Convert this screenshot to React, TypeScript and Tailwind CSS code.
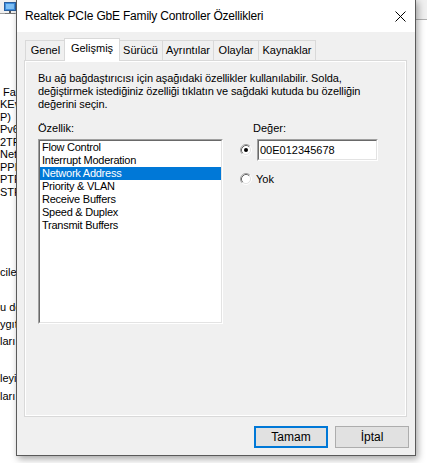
import React from "react";

function Radio({ checked }: { checked?: boolean }) {
  return (
    <svg width="12" height="12" viewBox="0 0 12 12" className="shrink-0">
      <circle cx="6" cy="6" r="4.5" fill="#ffffff" />
      <path d="M2.11 9.89 A5.5 5.5 0 0 1 9.89 2.11" fill="none" stroke="#a0a0a0" strokeWidth="1" />
      <path d="M9.89 2.11 A5.5 5.5 0 0 1 2.11 9.89" fill="none" stroke="#ffffff" strokeWidth="1" />
      <path d="M2.82 9.18 A4.5 4.5 0 0 1 9.18 2.82" fill="none" stroke="#696969" strokeWidth="1" />
      <path d="M9.18 2.82 A4.5 4.5 0 0 1 2.82 9.18" fill="none" stroke="#e3e3e3" strokeWidth="1" />
      {checked && <circle cx="6" cy="6" r="2" fill="#000000" />}
    </svg>
  );
}

const bgTop = [
  { y: 86, x: 3, t: "Fam" },
  { y: 98, x: 0, t: "KEv" },
  { y: 111, x: 0, t: "P)" },
  { y: 123, x: 0, t: "Pv6" },
  { y: 136, x: 0, t: "2TP" },
  { y: 148, x: 0, t: "Netw" },
  { y: 161, x: 0, t: "PPP" },
  { y: 173, x: 0, t: "PTP" },
  { y: 186, x: 0, t: "STP" },
  { y: 266, x: 0, t: "ciler" },
  { y: 301, x: 0, t: "u de" },
  { y: 318, x: 0, t: "ygıt" },
  { y: 335, x: 0, t: "ları" },
  { y: 372, x: 0, t: "leyi" },
  { y: 390, x: 0, t: "ları" },
];

const tabs = [
  { t: "Genel", w: 41 },
  { t: "Gelişmiş", w: 53, sel: true },
  { t: "Sürücü", w: 45 },
  { t: "Ayrıntılar", w: 52 },
  { t: "Olaylar", w: 46 },
  { t: "Kaynaklar", w: 58 },
];

const items = [
  "Flow Control",
  "Interrupt Moderation",
  "Network Address",
  "Priority & VLAN",
  "Receive Buffers",
  "Speed & Duplex",
  "Transmit Buffers",
];

export default function App() {
  return (
    <div
      className="relative w-[427px] h-[463px] overflow-hidden bg-white text-black"
      style={{ fontFamily: '"Liberation Sans", Arial, sans-serif' }}
    >
      {/* background window */}
      <div className="absolute inset-0">
        <div className="absolute left-0 top-0 w-[20px] h-[14px] bg-[#f0f0f0] border-b border-[#a0a0a0]" />
        <svg className="absolute left-[3px] top-[1px]" width="14" height="13" viewBox="0 0 14 13">
          <rect x="1.5" y="1.5" width="11" height="8" fill="#3c8ee0" stroke="#2a5f9e" />
          <rect x="3" y="3" width="8" height="5" fill="#7fc0f5" />
          <rect x="6" y="10" width="2" height="2" fill="#555" />
          <rect x="2" y="12" width="10" height="1" fill="#777" />
        </svg>
        <div className="absolute right-0 top-0 w-[20px] h-[20px] bg-[#f0f0f0] border-b border-[#b0b0b0]" />
        <div className="absolute left-0 top-0 w-[16px] h-full overflow-hidden">
          {bgTop.map((b, i) => (
            <div
              key={i}
              className="absolute text-[11px] leading-[12px] whitespace-nowrap"
              style={{ top: b.y, left: b.x }}
            >
              {b.t}
            </div>
          ))}
        </div>
      </div>

      {/* dialog */}
      <div className="absolute left-[16px] top-[-1px] w-[400px] h-[457px] border border-[#5a5a5a] bg-[#f0f0f0] shadow-[2px_3px_7px_rgba(0,0,0,0.35)] flex flex-col">
        <div className="h-[32px] bg-white flex items-center justify-between pl-[8px] pr-[9px]">
          <span className="text-[12px] tracking-[-0.2px] leading-[14px]">
            Realtek PCIe GbE Family Controller Özellikleri
          </span>
          <svg width="11" height="11" viewBox="0 0 11 11">
            <path d="M0.5 0.5 L10.5 10.5 M10.5 0.5 L0.5 10.5" stroke="#000" strokeWidth="1" />
          </svg>
        </div>

        <div className="flex flex-col pl-[7px] pt-[6px]">
          {/* tabs */}
          <div className="flex items-end h-[22px] pl-[1px] relative z-10">
            {tabs.map((tb, i) =>
              tb.sel ? (
                <div
                  key={i}
                  className="h-[23px] -mb-[1px] -ml-[2px] -mr-[1px] bg-white border border-b-0 border-[#d9d9d9] flex items-start justify-center pt-[3px] text-[11px] leading-[13px] relative z-10"
                  style={{ width: tb.w + 3 }}
                >
                  {tb.t}
                </div>
              ) : (
                <div
                  key={i}
                  className={
                    "h-[20px] bg-[#f0f0f0] border border-b-0 border-[#d9d9d9] flex items-center justify-center text-[11px] leading-[13px] " +
                    (i > 0 ? "-ml-[1px]" : "")
                  }
                  style={{ width: tb.w }}
                >
                  {tb.t}
                </div>
              )
            )}
          </div>

          {/* panel */}
          <div className="w-[383px] h-[357px] border border-[#d9d9d9] bg-[#f0f0f0] shadow-[inset_1px_1px_0_#ffffff,inset_-1px_-1px_0_#ffffff] pl-[13px] pt-[11px] text-[11px] leading-[13px]">
            <div className="tracking-[-0.1px]">
              Bu ağ bağdaştırıcısı için aşağıdaki özellikler kullanılabilir. Solda,
              <br />
              değiştirmek istediğiniz özelliği tıklatın ve sağdaki kutuda bu özelliğin
              <br />
              değerini seçin.
            </div>

            <div className="flex mt-[11px]">
              <div className="flex flex-col w-[185px] shrink-0">
                <div className="mb-[4px]">Özellik:</div>
                <div className="w-[185px] h-[185px] border border-t-[#a0a0a0] border-l-[#a0a0a0] border-r-white border-b-white">
                  <div className="h-full border border-t-[#696969] border-l-[#696969] border-r-[#e3e3e3] border-b-[#e3e3e3] bg-white overflow-hidden">
                    {items.map((it, i) => (
                      <div
                        key={i}
                        className={
                          "h-[13px] pl-[2px] leading-[13px] tracking-[-0.25px] whitespace-nowrap " +
                          (i === 2 ? "bg-[#0078d7] text-white" : "")
                        }
                      >
                        {it}
                      </div>
                    ))}
                  </div>
                </div>
              </div>

              <div className="flex flex-col ml-[17px]">
                <div className="mb-[4px] pl-[13px]">Değer:</div>
                <div className="flex items-center h-[22px]">
                  <Radio checked />
                  <div className="ml-[5px] w-[121px] h-[22px] border border-t-[#a0a0a0] border-l-[#a0a0a0] border-r-white border-b-white">
                    <div className="h-full border border-t-[#696969] border-l-[#696969] border-r-[#e3e3e3] border-b-[#e3e3e3] bg-white flex items-center pl-[1px]">
                      00E012345678
                    </div>
                  </div>
                </div>
                <div className="flex items-center mt-[12px] h-[12px]">
                  <Radio />
                  <span className="ml-[4px]">Yok</span>
                </div>
              </div>
            </div>
          </div>

          {/* buttons */}
          <div className="flex justify-end gap-[7px] mt-[9px] pr-[6px]">
            <button className="w-[74px] h-[22px] bg-[#e1e1e1] border-2 border-[#0078d7] text-[12px] leading-[14px] flex items-center justify-center">
              Tamam
            </button>
            <button className="w-[74px] h-[22px] bg-[#e1e1e1] border border-[#adadad] text-[12px] leading-[14px] flex items-center justify-center">
              İptal
            </button>
          </div>
        </div>
      </div>
    </div>
  );
}
